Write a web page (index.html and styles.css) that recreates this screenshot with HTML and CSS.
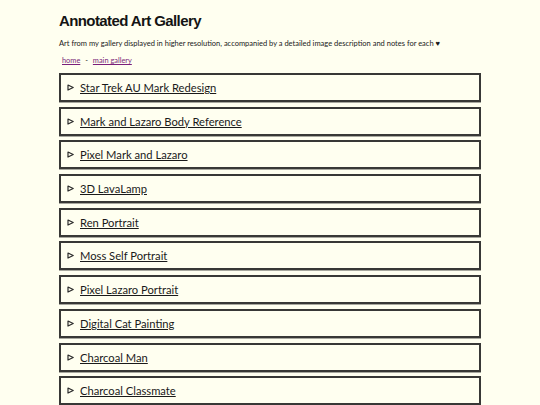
FILE: index.html
```html
<!DOCTYPE html>
<html lang="en">
<head>
<meta charset="utf-8">
<title>Annotated Art Gallery</title>
<link rel="stylesheet" href="styles.css">
</head>
<body>
<main class="page">
  <h1 class="title">Annotated Art Gallery</h1>
  <p class="intro">Art from my gallery displayed in higher resolution, accompanied by a detailed image description and notes for each ♥</p>
  <nav class="crumbs"><a href="#">home</a> <span class="sep">-</span> <a href="#">main gallery</a></nav>
  <div class="list">
    <details class="item"><summary><svg class="marker" viewBox="0 0 7 7"><polygon points="1,1 6.2,3.5 1,6"/></svg><span class="label">Star Trek AU Mark Redesign</span></summary></details>
    <details class="item"><summary><svg class="marker" viewBox="0 0 7 7"><polygon points="1,1 6.2,3.5 1,6"/></svg><span class="label">Mark and Lazaro Body Reference</span></summary></details>
    <details class="item"><summary><svg class="marker" viewBox="0 0 7 7"><polygon points="1,1 6.2,3.5 1,6"/></svg><span class="label">Pixel Mark and Lazaro</span></summary></details>
    <details class="item"><summary><svg class="marker" viewBox="0 0 7 7"><polygon points="1,1 6.2,3.5 1,6"/></svg><span class="label">3D LavaLamp</span></summary></details>
    <details class="item"><summary><svg class="marker" viewBox="0 0 7 7"><polygon points="1,1 6.2,3.5 1,6"/></svg><span class="label">Ren Portrait</span></summary></details>
    <details class="item"><summary><svg class="marker" viewBox="0 0 7 7"><polygon points="1,1 6.2,3.5 1,6"/></svg><span class="label">Moss Self Portrait</span></summary></details>
    <details class="item"><summary><svg class="marker" viewBox="0 0 7 7"><polygon points="1,1 6.2,3.5 1,6"/></svg><span class="label">Pixel Lazaro Portrait</span></summary></details>
    <details class="item"><summary><svg class="marker" viewBox="0 0 7 7"><polygon points="1,1 6.2,3.5 1,6"/></svg><span class="label">Digital Cat Painting</span></summary></details>
    <details class="item"><summary><svg class="marker" viewBox="0 0 7 7"><polygon points="1,1 6.2,3.5 1,6"/></svg><span class="label">Charcoal Man</span></summary></details>
    <details class="item"><summary><svg class="marker" viewBox="0 0 7 7"><polygon points="1,1 6.2,3.5 1,6"/></svg><span class="label">Charcoal Classmate</span></summary></details>
  </div>
</main>
</body>
</html>
```
FILE: styles.css
```css
html, body {
  margin: 0;
  padding: 0;
  background: #fffff0;
}
body {
  font-family: Lato, "Open Sans", sans-serif;
  color: #1a1a1a;
}
.page {
  width: 422px;
  margin: 0 auto;
  padding-top: 11px;
}
.title {
  margin: 0;
  font-family: "Liberation Sans", Arial, sans-serif;
  font-size: 15px;
  letter-spacing: -0.6px;
  font-weight: 700;
  line-height: 20px;
  color: #141414;
}
.intro {
  margin: 8px 0 0;
  font-size: 7.5px;
  line-height: 10px;
}
.crumbs {
  margin: 7px 0 0 3px;
  font-size: 7.4px;
  line-height: 10px;
}
.crumbs a {
  color: #7a1f7a;
}
.crumbs .sep {
  margin: 0 3px;
}
.list {
  margin-top: 7px;
  display: flex;
  flex-direction: column;
  gap: 4.7px;
}
.item {
  border: 2px solid #383836;
  box-shadow: 0 1px 0 #a8a89f;
}
.item summary {
  list-style: none;
  display: flex;
  align-items: center;
  height: 25px;
  padding-left: 6px;
  font-size: 11.2px;
  cursor: pointer;
}
.item summary::-webkit-details-marker {
  display: none;
}
.marker {
  width: 7px;
  height: 7px;
  margin-right: 6px;
  fill: none;
  stroke: #2a2a2a;
  stroke-width: 1.2;
  stroke-linejoin: round;
}
.label {
  text-decoration: underline;
  color: #1a1a1a;
}
```
